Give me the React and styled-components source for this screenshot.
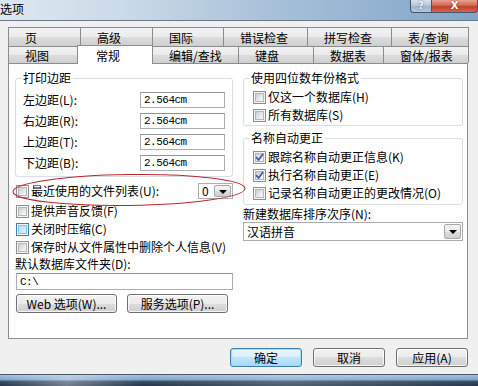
import React from "react";
import styled, { createGlobalStyle, css } from "styled-components";

const GlobalStyle = createGlobalStyle`
  html, body {
    margin: 0;
    padding: 0;
    background: #f0f0f0;
  }
  body {
    font-family: "Noto Sans CJK SC", "Noto Sans", sans-serif;
    font-size: 12px;
    color: #000;
  }
`;

const vistaFace = css`
  background: linear-gradient(#f2f2f2 0%, #ebebeb 50%, #dddddd 50%, #cfcfcf 100%);
`;

const Window = styled.div`
  position: relative;
  width: 478px;
  height: 386px;
  overflow: hidden;
  display: flex;
  flex-direction: column;
  background: #f0f0f0;
`;

const TitleBar = styled.div`
  box-sizing: border-box;
  height: 21px;
  flex: none;
  display: flex;
  align-items: flex-start;
  border-bottom: 1px solid #66798e;
  background: linear-gradient(
    90deg,
    #dde7f0 0%,
    #ccdbe8 25%,
    #a9c2da 55%,
    #93b2d0 80%,
    #82a4c6 100%
  );
`;

const Title = styled.span`
  font-size: 12px;
  line-height: 18px;
`;

const Caption = styled.div`
  margin-left: auto;
  display: flex;
`;

const CaptionButton = styled.div`
  box-sizing: border-box;
  width: ${(p) => p.$w}px;
  height: 13px;
  display: flex;
  align-items: center;
  justify-content: center;
  border: 1px solid #45566b;
  border-top: none;
  color: #fff;
  font: bold 10px "DejaVu Sans", sans-serif;
  line-height: 10px;
  ${(p) =>
    p.$close
      ? css`
          border-radius: 0 0 4px 0;
          background: linear-gradient(#e9a394 0%, #d2674f 45%, #c2412a 55%, #d3664d 100%);
          text-shadow: 0 0 2px #7a1d10;
        `
      : css`
          border-radius: 0 0 0 4px;
          border-right: none;
          background: linear-gradient(#d6e2ee 0%, #b7c9dc 45%, #9db4cc 55%, #b4c8dc 100%);
          color: #f4f7fa;
          text-shadow: 0 0 2px #4d6178;
        `}
`;

const Body = styled.div`
  box-sizing: border-box;
  height: 353px;
  flex: none;
  padding: 6px 10px 0 8px;
  display: flex;
  flex-direction: column;
`;

const TabRow = styled.div`
  display: flex;
  align-items: flex-end;
  height: ${(p) => p.$h}px;
`;

const Tab = styled.div`
  box-sizing: border-box;
  flex: none;
  width: ${(p) => p.$w}px;
  height: 100%;
  margin-left: -1px;
  padding-left: 16px;
  display: flex;
  align-items: center;
  border: 1px solid #898c95;
  border-bottom: none;
  font-size: 12px;
  ${vistaFace}
  &:first-child {
    margin-left: 0;
  }
  ${(p) =>
    p.$active &&
    css`
      position: relative;
      z-index: 1;
      height: 19px;
      margin-top: -1px;
      margin-bottom: -1px;
      margin-left: -2px;
      padding-left: 18px;
      background: #fff;
    `}
`;

const Panel = styled.div`
  box-sizing: border-box;
  height: 276px;
  flex: none;
  background: #fff;
  border: 1px solid #898c95;
  padding: 7px 3px 0 6px;
  display: grid;
  grid-template-columns: 218px 220px;
  column-gap: 10px;
  align-items: start;
`;

const Column = styled.div`
  display: flex;
  flex-direction: column;
`;

const Group = styled.fieldset`
  margin: ${(p) => p.$mt || 0}px 0 0 0;
  padding: 0;
  min-width: 0;
  border: 1px solid #d5dfe5;
  border-radius: 3px;
`;

const Legend = styled.legend`
  margin-left: 5px;
  padding: 0 2px;
  font-size: 12px;
  line-height: 14px;
`;

const GroupBody = styled.div`
  display: flex;
  flex-direction: column;
  gap: ${(p) => p.$gap || 0}px;
  padding: ${(p) => p.$pad};
`;

const FieldRow = styled.div`
  height: 16px;
  display: flex;
  align-items: center;
  justify-content: space-between;
  line-height: 14px;
`;

const TextBox = styled.div`
  box-sizing: border-box;
  width: ${(p) => (p.$w ? `${p.$w}px` : "auto")};
  height: ${(p) => p.$h}px;
  margin-top: ${(p) => p.$mt || 0}px;
  margin-left: ${(p) => p.$ml || 0}px;
  border: 1px solid #abadb3;
  border-top-color: #8f949c;
  background: #fff;
  padding-left: 3px;
  display: flex;
  align-items: center;
  font: 11px "Liberation Mono", monospace;
  letter-spacing: -0.5px;
`;

const CheckRow = styled.div`
  height: 18px;
  display: flex;
  align-items: center;
  gap: 2px;
  padding-left: ${(p) => p.$indent || 0}px;
  margin: ${(p) => p.$mt || 0}px 0 ${(p) => p.$mb || 0}px 0;
  line-height: 14px;
  white-space: nowrap;
`;

const Box = styled.span`
  box-sizing: border-box;
  position: relative;
  flex: none;
  width: 13px;
  height: 13px;
  border: 1px solid #8e8f8f;
  background: #f4f4f4;
  &::before {
    content: "";
    position: absolute;
    inset: 1px;
    background: ${(p) =>
      p.$hot
        ? "linear-gradient(135deg, #b9def5 0%, #def1fb 100%)"
        : "linear-gradient(135deg, #c9ccd0 0%, #eeeff0 70%, #f7f7f7 100%)"};
    border: 1px solid ${(p) => (p.$hot ? "#79c6f0" : "#b4b7bb")};
  }
  ${(p) =>
    p.$hot &&
    css`
      border-color: #3c7fb1;
    `}
  svg {
    position: absolute;
    left: 1px;
    top: 1px;
  }
`;

const Label = styled.div`
  line-height: 14px;
  margin-top: ${(p) => p.$mt || 0}px;
  white-space: nowrap;
`;

const Spacer = styled.span`
  flex: 1;
`;

const Combo = styled.div`
  box-sizing: border-box;
  width: ${(p) => p.$w}px;
  height: ${(p) => p.$h}px;
  margin-top: ${(p) => p.$mt || 0}px;
  border: 1px solid #abadb3;
  background: #fff;
  display: flex;
  align-items: center;
  padding: 1px 1px 1px 3px;
  font-size: 12px;
`;

const ComboValue = styled.span`
  flex: 1;
  line-height: 14px;
`;

const DropButton = styled.span`
  box-sizing: border-box;
  width: 17px;
  height: 100%;
  border: 1px solid #a7a9ad;
  border-radius: 2px;
  display: flex;
  align-items: center;
  justify-content: center;
  ${vistaFace}
`;

const Arrow = styled.span`
  width: 0;
  height: 0;
  border-left: 4px solid transparent;
  border-right: 4px solid transparent;
  border-top: 4px solid #000;
  margin-top: 1px;
`;

const ButtonRow = styled.div`
  display: flex;
  gap: ${(p) => p.$gap}px;
  justify-content: ${(p) => (p.$end ? "flex-end" : "flex-start")};
  margin-top: ${(p) => p.$mt}px;
  padding-left: ${(p) => p.$indent || 0}px;
`;

const PushButton = styled.button`
  box-sizing: border-box;
  width: ${(p) => p.$w}px;
  height: 19px;
  padding: 0;
  border: 1px solid #707070;
  border-radius: 3px;
  font: 12px "Noto Sans CJK SC", sans-serif;
  line-height: 14px;
  color: #000;
  box-shadow: inset 0 0 0 1px rgba(255, 255, 255, 0.75);
  ${vistaFace}
  ${(p) =>
    p.$default &&
    css`
      border-color: #3c7fb1;
      box-shadow: inset 0 0 0 1px #9fdcf9;
      background: linear-gradient(#eaf6fd 0%, #d9f0fc 50%, #bee6fd 50%, #a7d9f5 100%);
    `}
`;

const Frame = styled.div`
  flex: 1;
  border-top: 1px solid #46596d;
  background: linear-gradient(
      90deg,
      rgba(255, 255, 255, 0) 0%,
      rgba(255, 255, 255, 0.35) 14%,
      rgba(255, 255, 255, 0) 30%,
      rgba(255, 255, 255, 0.2) 60%,
      rgba(255, 255, 255, 0) 100%
    ),
    linear-gradient(#a2bfdd 0px, #7fa3c9 5px, #3a4f66 6px, #23354a 100%);
`;

const Annotation = styled.svg`
  position: absolute;
  left: 10px;
  top: 170px;
  pointer-events: none;
`;

const CheckMark = () => (
  <svg width="9" height="9" viewBox="0 0 9 9">
    <path
      d="M1.5 4.6 L3.6 7 L7.6 1.4"
      fill="none"
      stroke="#3f58a2"
      strokeWidth="1.7"
      strokeLinecap="round"
      strokeLinejoin="round"
    />
  </svg>
);

const Check = ({ checked, hot, children, indent }) => (
  <CheckRow $indent={indent}>
    <Box $hot={hot}>{checked && <CheckMark />}</Box>
    <span>{children}</span>
  </CheckRow>
);

const tabRows = [
  [
    { label: "页", w: 73 },
    { label: "高级", w: 73 },
    { label: "国际", w: 72 },
    { label: "错误检查", w: 85 },
    { label: "拼写检查", w: 85 },
    { label: "表/查询", w: 78 },
  ],
  [
    { label: "视图", w: 71 },
    { label: "常规", w: 76, active: true },
    { label: "编辑/查找", w: 87 },
    { label: "键盘", w: 76 },
    { label: "数据表", w: 71 },
    { label: "窗体/报表", w: 86 },
  ],
];

const margins = ["左边距(L):", "右边距(R):", "上边距(T):", "下边距(B):"];

const App = () => {
  return (
    <>
      <GlobalStyle />
      <Window>
        <TitleBar>
          <Title>选项</Title>
          <Caption>
            <CaptionButton $w={21}>?</CaptionButton>
            <CaptionButton $w={47} $close>
              X
            </CaptionButton>
          </Caption>
        </TitleBar>

        <Body>
          <TabRow $h={19}>
            {tabRows[0].map((t) => (
              <Tab key={t.label} $w={t.w}>
                {t.label}
              </Tab>
            ))}
          </TabRow>
          <TabRow $h={17}>
            {tabRows[1].map((t) => (
              <Tab key={t.label} $w={t.w} $active={t.active}>
                {t.label}
              </Tab>
            ))}
          </TabRow>

          <Panel>
            <Column>
              <Group>
                <Legend>打印边距</Legend>
                <GroupBody $pad="7px 7px 5px 7px" $gap={5}>
                  {margins.map((m) => (
                    <FieldRow key={m}>
                      <span>{m}</span>
                      <TextBox $w={85} $h={16}>
                        2.564cm
                      </TextBox>
                    </FieldRow>
                  ))}
                </GroupBody>
              </Group>

              <CheckRow $indent={1} $mt={5} $mb={2}>
                <Box />
                <span>最近使用的文件列表(U):</span>
                <Spacer />
                <Combo $w={35} $h={16}>
                  <ComboValue>0</ComboValue>
                  <DropButton>
                    <Arrow />
                  </DropButton>
                </Combo>
              </CheckRow>
              <Check indent={1}>提供声音反馈(F)</Check>
              <Check indent={1} hot>
                关闭时压缩(C)
              </Check>
              <Check indent={1}>保存时从文件属性中删除个人信息(V)</Check>
              <Label $mt={1}>默认数据库文件夹(D):</Label>
              <TextBox $h={17} $mt={2} $ml={1}>
                C:\
              </TextBox>
              <ButtonRow $gap={10} $mt={4} $indent={1}>
                <PushButton $w={101}>Web 选项(W)...</PushButton>
                <PushButton $w={101}>服务选项(P)...</PushButton>
              </ButtonRow>
            </Column>

            <Column>
              <Group>
                <Legend>使用四位数年份格式</Legend>
                <GroupBody $pad="3px 0 1px 9px">
                  <Check>仅这一个数据库(H)</Check>
                  <Check>所有数据库(S)</Check>
                </GroupBody>
              </Group>
              <Group $mt={5}>
                <Legend>名称自动更正</Legend>
                <GroupBody $pad="3px 0 2px 9px">
                  <Check checked>跟踪名称自动更正信息(K)</Check>
                  <Check checked>执行名称自动更正(E)</Check>
                  <Check>记录名称自动更正的更改情况(O)</Check>
                </GroupBody>
              </Group>
              <Label $mt={2}>新建数据库排序次序(N):</Label>
              <Combo $w={220} $h={19} $mt={1}>
                <ComboValue>汉语拼音</ComboValue>
                <DropButton>
                  <Arrow />
                </DropButton>
              </Combo>
            </Column>
          </Panel>

          <ButtonRow $gap={11} $mt={9} $end>
            <PushButton $w={72} $default>
              确定
            </PushButton>
            <PushButton $w={72}>取消</PushButton>
            <PushButton $w={72}>应用(A)</PushButton>
          </ButtonRow>
        </Body>

        <Frame />

        <Annotation width="240" height="42" viewBox="0 0 240 42">
          <ellipse
            cx="119"
            cy="20"
            rx="116"
            ry="15.5"
            fill="none"
            stroke="#b8262c"
            strokeWidth="1"
            transform="rotate(-0.8 119 20)"
          />
        </Annotation>
      </Window>
    </>
  );
};

export default App;
